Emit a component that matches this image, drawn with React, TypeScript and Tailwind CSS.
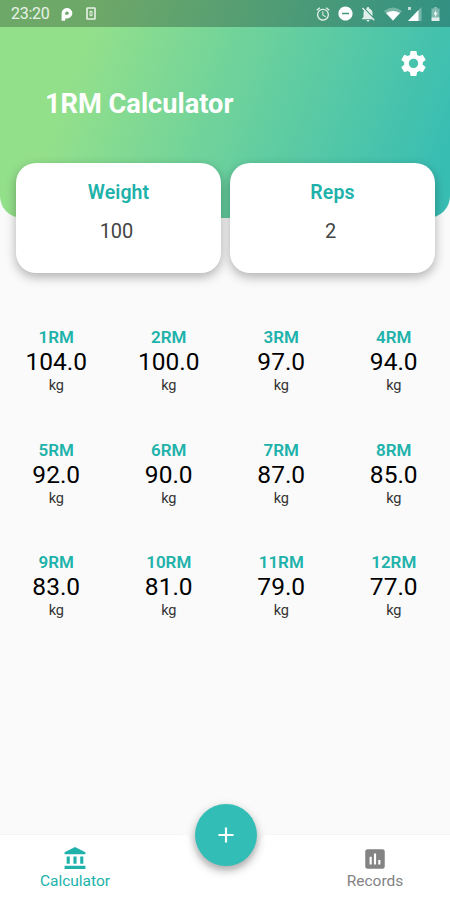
import React from 'react';
import {
  MdAccountBalance,
  MdAdd,
  MdAlarm,
  MdAssessment,
  MdDoNotDisturbOn,
  MdNotificationsOff,
  MdSettings,
} from 'react-icons/md';

const results = [
  { label: '1RM', value: '104.0' },
  { label: '2RM', value: '100.0' },
  { label: '3RM', value: '97.0' },
  { label: '4RM', value: '94.0' },
  { label: '5RM', value: '92.0' },
  { label: '6RM', value: '90.0' },
  { label: '7RM', value: '87.0' },
  { label: '8RM', value: '85.0' },
  { label: '9RM', value: '83.0' },
  { label: '10RM', value: '81.0' },
  { label: '11RM', value: '79.0' },
  { label: '12RM', value: '77.0' },
];

const StatusBar = () => (
  <div className="flex h-[27px] items-center bg-black/25 pl-[11px] pr-[10px] text-white/85">
    <span className="w-[50px] pt-px text-[16px] leading-none tracking-[-0.3px]">23:20</span>
    {/* Parking app */}
    <svg className="h-[14px] w-[12px] text-white" viewBox="0 0 12 14" fill="none">
      <path
        d="M2.4 12V6.4a3.6 3.4 0 1 1 3.6 3.2"
        stroke="currentColor"
        strokeWidth="3.6"
        strokeLinecap="square"
      />
    </svg>
    {/* Sim card */}
    <svg className="ml-[13px] h-[13px] w-[10px]" viewBox="0 0 10 13" fill="none" stroke="currentColor">
      <rect x="1" y="1" width="8" height="11" rx="0.6" strokeWidth="1.6" />
      <path d="M4 4.3h2v4.4H4z" strokeWidth="1" />
    </svg>
    <div className="ml-auto flex items-center">
      <MdAlarm className="h-4 w-4" />
      <MdDoNotDisturbOn className="ml-[6px] h-[17px] w-[17px] text-white" />
      <MdNotificationsOff className="ml-[5px] h-[18px] w-[18px]" />
      <svg className="ml-[7px] h-[14px] w-[18px]" viewBox="0 0 18 14" fill="currentColor">
        <path d="M0 4Q9-3 18 4L9 14Z" opacity="0.35" />
        <path d="M2 6Q9 2 16 6L9 13.5Z" className="text-white" />
      </svg>
      <svg className="ml-[6px] h-[15px] w-[14px]" viewBox="0 0 14 15" fill="currentColor">
        <path d="M13.5 1v14H0Z" opacity="0.4" />
        <path d="M10.5 4v11H0Z" className="text-white" />
        <path d="M0 1h3v3H0z" opacity="0.8" />
      </svg>
      <svg className="ml-[9px] h-[14px] w-[9px]" viewBox="0 0 9 14" fill="currentColor">
        <path d="M3 0h3v1.5h2.5V11h-8V1.5H3z" opacity="0.45" />
        <path d="M.5 10.5h8V14h-8zM5 3 2.5 7.5H4V10l2.8-4.2H5z" />
      </svg>
    </div>
  </div>
);

const InputCard = ({ label, value }: { label: string; value: string }) => (
  <div className="flex h-[110px] flex-1 flex-col items-center rounded-[20px] bg-white pt-[18px] shadow-[0_4px_11px_rgba(0,0,0,0.3)]">
    <span className="text-[19.5px] font-semibold leading-6 tracking-[0.1px] text-[#20b2aa]">{label}</span>
    <span className="mt-[14px] pr-1 text-[20px] leading-6 text-[#444]">{value}</span>
  </div>
);

const ResultCell = ({ label, value }: { label: string; value: string }) => (
  <div className="flex h-[112.5px] flex-col items-center">
    <span className="text-[17px] font-semibold leading-5 text-[#20b2aa]">{label}</span>
    <span className="mt-px text-[24.5px] leading-[27px] text-black">{value}</span>
    <span className="mt-[2px] text-[14.5px] leading-[18px] tracking-[-0.2px] text-[#333]">kg</span>
  </div>
);

const BottomBar = () => (
  <div className="relative flex h-[66px] justify-between border-t border-[#f4f4f4] bg-white">
    {/* Notch around the add button */}
    <svg className="absolute -top-px left-[180px] h-[42px] w-[91px]" viewBox="0 0 91 42">
      <path d="M0 0C7 0 9 3 12 9C17 26 28 37 45.5 37C63 37 74 26 79 9C82 3 84 0 91 0Z" fill="#fafafa" />
    </svg>
    <div className="flex w-[150px] flex-col items-center pt-[11px] text-[#20b2aa]">
      <MdAccountBalance className="h-[25px] w-[26px]" />
      <span className="mt-px text-[15.5px] leading-[18px]">Calculator</span>
    </div>
    <div className="flex w-[150px] flex-col items-center pt-[11px] text-[#838383]">
      <MdAssessment className="h-[26px] w-[26px]" />
      <span className="text-[15.5px] leading-[18px]">Records</span>
    </div>
    <button className="absolute -top-[31px] left-[194.5px] flex h-[62px] w-[62px] items-center justify-center rounded-full bg-[#32beb7] text-white shadow-[0_4px_10px_rgba(0,0,0,0.35)]">
      <MdAdd className="h-[26px] w-[26px]" />
    </button>
  </div>
);

export default function App() {
  return (
    <div className="flex h-[900px] w-[450px] flex-col overflow-hidden bg-[#fafafa] font-['Roboto',sans-serif]">
      <header className="h-[218px] shrink-0 rounded-b-[22px] bg-[linear-gradient(110deg,#93e08b_19%,#38bdb3_95%)]">
        <StatusBar />
        <div className="flex justify-end pr-[21px] pt-[21px]">
          <MdSettings className="h-[31px] w-[31px] text-white" />
        </div>
        <h1 className="ml-[45px] mt-[9px] text-[27.2px] font-bold leading-8 text-white">1RM Calculator</h1>
      </header>

      <section className="-mt-[55px] flex gap-[9px] pl-4 pr-[15px]">
        <InputCard label="Weight" value="100" />
        <InputCard label="Reps" value="2" />
      </section>

      <main className="mt-[54px] grid flex-1 grid-cols-4 content-start">
        {results.map((r) => (
          <ResultCell key={r.label} label={r.label} value={r.value} />
        ))}
      </main>

      <BottomBar />
    </div>
  );
}
